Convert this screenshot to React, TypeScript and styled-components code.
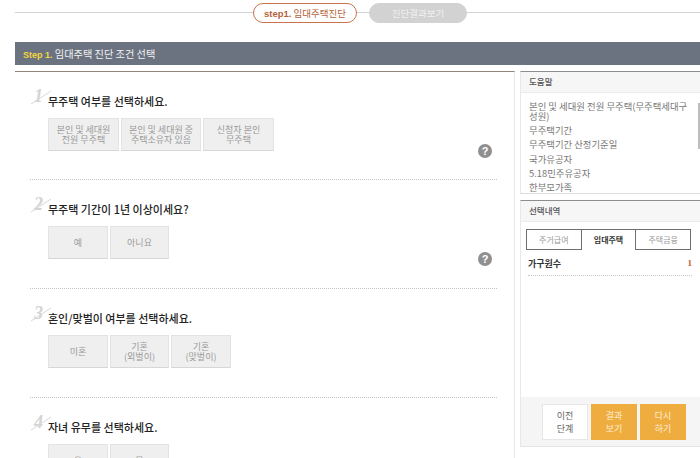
import React from "react";
import styled, { createGlobalStyle } from "styled-components";

const GlobalStyle = createGlobalStyle`
  html, body {
    margin: 0;
    padding: 0;
    height: 458px;
    overflow: hidden;
    background: #fff;
    font-family: "Noto Sans CJK KR", "Noto Sans", sans-serif;
  }
`;

type Question = {
  no: number;
  title: string;
  options: string[][];
  help?: boolean;
  wide?: boolean;
};

const questions: Question[] = [
  {
    no: 1,
    title: "무주택 여부를 선택하세요.",
    options: [
      ["본인 및 세대원", "전원 무주택"],
      ["본인 및 세대원 중", "주택소유자 있음"],
      ["신청자 본인", "무주택"],
    ],
    help: true,
    wide: true,
  },
  {
    no: 2,
    title: "무주택 기간이 1년 이상이세요?",
    options: [["예"], ["아니요"]],
    help: true,
  },
  {
    no: 3,
    title: "혼인/맞벌이 여부를 선택하세요.",
    options: [["미혼"], ["기혼", "(외벌이)"], ["기혼", "(맞벌이)"]],
  },
  {
    no: 4,
    title: "자녀 유무를 선택하세요.",
    options: [["유"], ["무"]],
  },
];

const helpItems = [
  "본인 및 세대원 전원 무주택(무주택세대구성원)",
  "무주택기간",
  "무주택기간 산정기준일",
  "국가유공자",
  "5.18민주유공자",
  "한부모가족",
];

const App: React.FC = () => {
  return (
    <Page>
      <GlobalStyle />
      <Steps>
        <StepPill $active>
          <b>step1.</b> 임대주택진단
        </StepPill>
        <StepPill>진단결과보기</StepPill>
      </Steps>
      <TitleBar>
        <em>Step 1.</em> 임대주택 진단 조건 선택
      </TitleBar>
      <Columns>
        <Main>
          {questions.map((q) => (
            <Section key={q.no}>
              <QuestionTitle>
                <Num>{q.no}</Num>
                <Slash viewBox="0 0 20 16">
                  <line x1="0" y1="15" x2="20" y2="2" stroke="#d8d8d8" strokeWidth="1" />
                </Slash>
                {q.title}
              </QuestionTitle>
              <OptionRow>
                {q.options.map((lines) => (
                  <Option key={lines.join()} $wide={q.wide}>
                    {lines.map((l) => (
                      <span key={l}>{l}</span>
                    ))}
                  </Option>
                ))}
                {q.help && <HelpMark>?</HelpMark>}
              </OptionRow>
            </Section>
          ))}
        </Main>
        <Side>
          <HelpPanel>
            <PanelHead>도움말</PanelHead>
            <HelpList>
              {helpItems.map((item) => (
                <li key={item}>{item}</li>
              ))}
            </HelpList>
            <ScrollThumb />
          </HelpPanel>
          <ChoicePanel>
            <PanelHead>선택내역</PanelHead>
            <Tabs>
              <Tab>주거급여</Tab>
              <Tab $active>임대주택</Tab>
              <Tab>주택금융</Tab>
            </Tabs>
            <ChoiceBody>
              <ChoiceRow>
                <strong>가구원수</strong>
                <b>1</b>
              </ChoiceRow>
            </ChoiceBody>
            <Actions>
              <ActionButton>
                이전
                <br />
                단계
              </ActionButton>
              <ActionButton $primary>
                결과
                <br />
                보기
              </ActionButton>
              <ActionButton $primary>
                다시
                <br />
                하기
              </ActionButton>
            </Actions>
          </ChoicePanel>
        </Side>
      </Columns>
    </Page>
  );
};

const Page = styled.div`
  width: 700px;
  height: 458px;
  overflow: hidden;
  padding-left: 15px;
  box-sizing: border-box;
`;

const Steps = styled.div`
  display: flex;
  align-items: center;
  gap: 12px;
  height: 24px;
  margin-top: 1px;
  padding-left: 238px;
  background: linear-gradient(#d4d4d4, #d4d4d4) 0 11px / 100% 1px no-repeat;
`;

const StepPill = styled.div<{ $active?: boolean }>`
  box-sizing: border-box;
  height: 20px;
  width: ${(p) => (p.$active ? "104px" : "98px")};
  border-radius: 10px;
  border: 1px solid ${(p) => (p.$active ? "#c8734a" : "#d2d2d2")};
  background: ${(p) => (p.$active ? "#fff" : "#d2d2d2")};
  color: ${(p) => (p.$active ? "#b5633a" : "#f0f0f0")};
  font-size: 9.5px;
  line-height: 18px;
  text-align: center;
  white-space: nowrap;

  b {
    font-family: "Liberation Sans", sans-serif;
    font-size: 9.5px;
  }
`;

const TitleBar = styled.div`
  height: 23px;
  margin-top: 17px;
  padding-left: 8px;
  background: #6b7280;
  color: #f2f2f2;
  font-size: 10.2px;
  line-height: 23px;

  em {
    font-family: "Liberation Sans", sans-serif;
    font-style: normal;
    font-weight: bold;
    font-size: 9px;
    color: #f5d63d;
  }
`;

const Columns = styled.div`
  display: flex;
  gap: 5px;
  margin-top: 6px;
`;

const Main = styled.div`
  box-sizing: border-box;
  width: 500px;
  height: 420px;
  padding: 0 17px 0 15px;
  border-top: 1px solid #8d8780;
  border-right: 1px solid #e8e8e8;
`;

const Section = styled.section`
  box-sizing: border-box;
  height: 109px;
  padding-top: 21px;
  border-bottom: 1px dotted #c4c4c4;

  &:first-child {
    height: 108px;
  }

  &:last-child {
    border-bottom: none;
  }
`;

const QuestionTitle = styled.h3`
  position: relative;
  margin: 0 0 9px;
  padding-left: 18px;
  height: 16px;
  color: #222;
  font-size: 11px;
  font-weight: 500;
  line-height: 16px;
  white-space: nowrap;
`;

const Num = styled.span`
  position: absolute;
  left: 4px;
  top: -6px;
  color: #d4d4d4;
  font-family: "Liberation Serif", serif;
  font-size: 18px;
  font-style: italic;
  font-weight: bold;
  line-height: 18px;
`;

const Slash = styled.svg`
  position: absolute;
  left: 1px;
  top: -4px;
  width: 20px;
  height: 16px;
`;

const OptionRow = styled.div`
  display: flex;
  align-items: flex-start;
  gap: 2px;
  margin-left: 18px;
`;

const Option = styled.button<{ $wide?: boolean }>`
  display: flex;
  flex-direction: column;
  align-items: center;
  justify-content: center;
  box-sizing: border-box;
  min-width: ${(p) => (p.$wide ? "71px" : "60px")};
  height: 33px;
  padding: 0;
  margin: 0;
  border: 1px solid #e3e3e3;
  border-bottom-color: #d6d6d6;
  background: #efefef;
  color: #9a9a9a;
  font-family: inherit;
  font-size: 9px;
  line-height: 10px;
  white-space: nowrap;

  &:nth-child(2) {
    min-width: ${(p) => (p.$wide ? "80px" : "59px")};
  }
`;

const HelpMark = styled.span`
  width: 14px;
  height: 14px;
  margin: 26px 5px 0 auto;
  border-radius: 50%;
  background: #8f8f8f;
  color: #fff;
  font-family: "Liberation Sans", sans-serif;
  font-size: 11px;
  font-weight: bold;
  line-height: 14px;
  text-align: center;
`;

const Side = styled.aside`
  display: flex;
  flex-direction: column;
  gap: 6px;
  width: 180px;
`;

const HelpPanel = styled.div`
  position: relative;
  box-sizing: border-box;
  height: 123px;
  overflow: hidden;
  border-top: 1px solid #8d8d8d;
  border-bottom: 1px solid #dcdcdc;
  border-left: 1px solid #e8e8e8;
`;

const PanelHead = styled.div`
  box-sizing: border-box;
  height: 21px;
  padding-left: 8px;
  background: #f6f6f6;
  border-bottom: 1px solid #ececec;
  color: #555;
  font-size: 8.5px;
  font-weight: 500;
  line-height: 19px;
`;

const HelpList = styled.ul`
  margin: 0;
  padding: 7.5px 5px 0 8px;
  list-style: none;
  color: #777;
  font-size: 9.4px;
  line-height: 10px;

  li {
    margin-bottom: 4.4px;
    word-break: break-all;
  }
`;

const ScrollThumb = styled.div`
  position: absolute;
  right: 0;
  top: 31px;
  width: 2px;
  height: 46px;
  background: #bdbdbd;
`;

const ChoicePanel = styled.div`
  display: flex;
  flex-direction: column;
  box-sizing: border-box;
  height: 247px;
  border-top: 1px solid #8d8d8d;
  border-bottom: 1px solid #e4e4e4;
  border-left: 1px solid #e8e8e8;
`;

const Tabs = styled.div`
  display: flex;
  margin: 7px 0 0 5px;
  width: 165px;
`;

const Tab = styled.div<{ $active?: boolean }>`
  flex: 1;
  box-sizing: border-box;
  height: ${(p) => (p.$active ? "22px" : "21px")};
  border: 1px solid #6f6f6f;
  border-bottom: ${(p) => (p.$active ? "none" : "1px solid #6f6f6f")};
  border-left-width: ${(p) => (p.$active ? "0" : "1px")};
  border-right-width: ${(p) => (p.$active ? "0" : "1px")};
  color: ${(p) => (p.$active ? "#333" : "#999")};
  font-size: 8px;
  font-weight: ${(p) => (p.$active ? 700 : 400)};
  line-height: 19px;
  text-align: center;
`;

const ChoiceBody = styled.div`
  flex: 1;
  padding: 5px 8px 0 7px;
`;

const ChoiceRow = styled.div`
  display: flex;
  align-items: flex-start;
  justify-content: space-between;
  height: 19px;
  border-bottom: 1px dotted #c8c8c8;
  color: #333;
  font-size: 9px;
  line-height: 15px;

  strong {
    font-weight: 700;
  }

  b {
    color: #c9602c;
    font-family: "Liberation Serif", serif;
    font-size: 9px;
  }
`;

const Actions = styled.div`
  display: flex;
  gap: 3px;
  box-sizing: border-box;
  height: 49px;
  padding: 7px 0 0 21px;
  background: #f5f5f5;
`;

const ActionButton = styled.button<{ $primary?: boolean }>`
  box-sizing: border-box;
  width: 46px;
  height: 36px;
  padding: 0;
  border: 1px solid ${(p) => (p.$primary ? "#f0ad3f" : "#e6e6e6")};
  background: ${(p) => (p.$primary ? "#f0ad3f" : "#fff")};
  color: ${(p) => (p.$primary ? "#fbeed6" : "#666")};
  font-family: inherit;
  font-size: 9px;
  line-height: 13px;
`;

export default App;
